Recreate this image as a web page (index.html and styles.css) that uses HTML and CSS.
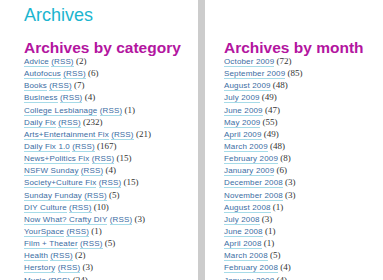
FILE: index.html
```html
<!DOCTYPE html>
<html lang="en">
<head>
    <meta charset="UTF-8">
    <title>Archives</title>
    <link rel="stylesheet" href="styles.css">
</head>
<body>

<div class="page">
    <div class="main">
        <h1 class="page-title">Archives</h1>
        <h2>Archives by category</h2>
        <ul class="archive-list">
            <li><a href="#">Advice</a> <a href="#">(RSS)</a> <span class="count">(2)</span></li>
            <li><a href="#">Autofocus</a> <a href="#">(RSS)</a> <span class="count">(6)</span></li>
            <li><a href="#">Books</a> <a href="#">(RSS)</a> <span class="count">(7)</span></li>
            <li><a href="#">Business</a> <a href="#">(RSS)</a> <span class="count">(4)</span></li>
            <li><a href="#">College Lesbianage</a> <a href="#">(RSS)</a> <span class="count">(1)</span></li>
            <li><a href="#">Daily Fix</a> <a href="#">(RSS)</a> <span class="count">(232)</span></li>
            <li><a href="#">Arts+Entertainment Fix</a> <a href="#">(RSS)</a> <span class="count">(21)</span></li>
            <li><a href="#">Daily Fix 1.0</a> <a href="#">(RSS)</a> <span class="count">(167)</span></li>
            <li><a href="#">News+Politics Fix</a> <a href="#">(RSS)</a> <span class="count">(15)</span></li>
            <li><a href="#">NSFW Sunday</a> <a href="#">(RSS)</a> <span class="count">(4)</span></li>
            <li><a href="#">Society+Culture Fix</a> <a href="#">(RSS)</a> <span class="count">(15)</span></li>
            <li><a href="#">Sunday Funday</a> <a href="#">(RSS)</a> <span class="count">(5)</span></li>
            <li><a href="#">DIY Culture</a> <a href="#">(RSS)</a> <span class="count">(10)</span></li>
            <li><a href="#">Now What? Crafty DIY</a> <a href="#">(RSS)</a> <span class="count">(3)</span></li>
            <li><a href="#">YourSpace</a> <a href="#">(RSS)</a> <span class="count">(1)</span></li>
            <li><a href="#">Film + Theater</a> <a href="#">(RSS)</a> <span class="count">(5)</span></li>
            <li><a href="#">Health</a> <a href="#">(RSS)</a> <span class="count">(2)</span></li>
            <li><a href="#">Herstory</a> <a href="#">(RSS)</a> <span class="count">(3)</span></li>
            <li><a href="#">Music</a> <a href="#">(RSS)</a> <span class="count">(34)</span></li>
        </ul>
    </div>

    <div class="sidebar">
        <h2>Archives by month</h2>
        <ul class="archive-list">
            <li><a href="#">October 2009</a> <span class="count">(72)</span></li>
            <li><a href="#">September 2009</a> <span class="count">(85)</span></li>
            <li><a href="#">August 2009</a> <span class="count">(48)</span></li>
            <li><a href="#">July 2009</a> <span class="count">(49)</span></li>
            <li><a href="#">June 2009</a> <span class="count">(47)</span></li>
            <li><a href="#">May 2009</a> <span class="count">(55)</span></li>
            <li><a href="#">April 2009</a> <span class="count">(49)</span></li>
            <li><a href="#">March 2009</a> <span class="count">(48)</span></li>
            <li><a href="#">February 2009</a> <span class="count">(8)</span></li>
            <li><a href="#">January 2009</a> <span class="count">(6)</span></li>
            <li><a href="#">December 2008</a> <span class="count">(3)</span></li>
            <li><a href="#">November 2008</a> <span class="count">(3)</span></li>
            <li><a href="#">August 2008</a> <span class="count">(1)</span></li>
            <li><a href="#">July 2008</a> <span class="count">(3)</span></li>
            <li><a href="#">June 2008</a> <span class="count">(1)</span></li>
            <li><a href="#">April 2008</a> <span class="count">(1)</span></li>
            <li><a href="#">March 2008</a> <span class="count">(5)</span></li>
            <li><a href="#">February 2008</a> <span class="count">(4)</span></li>
            <li><a href="#">January 2008</a> <span class="count">(4)</span></li>
        </ul>
    </div>
</div>

</body>
</html>
```

FILE: styles.css
```css
body {
    margin: 0;
    background: #fff;
    font-family: "Liberation Sans", Arial, sans-serif;
    color: #333;
}
.page {
    display: flex;
    align-items: flex-start;
}
.main {
    width: 174px;
    padding-left: 24px;
    flex-shrink: 0;
}
.sidebar {
    flex: 1;
    border-left: 7px solid #cccccc;
    padding-left: 19px;
    padding-top: 39px;
    min-height: 300px;
    white-space: nowrap;
}
.page-title {
    margin: 5px 0 13px;
    font-size: 18px;
    font-weight: normal;
    line-height: 21px;
    color: #1cb5cf;
}
h2 {
    margin: 0;
    font-size: 15.5px;
    line-height: 17px;
    color: #b3159f;
}
.archive-list {
    list-style: none;
    margin: 0;
    padding: 0;
    font-size: 8px;
    line-height: 12.15px;
    white-space: nowrap;
}
.archive-list li {
    height: 12.15px;
}
.archive-list a {
    color: #3b6da3;
    text-decoration: none;
    letter-spacing: 0.15px;
    border-bottom: 1px solid #a6dbe8;
}
.count {
    font-family: "Liberation Serif", "Times New Roman", serif;
    font-size: 9px;
    line-height: 1;
    color: #333;
}
```
